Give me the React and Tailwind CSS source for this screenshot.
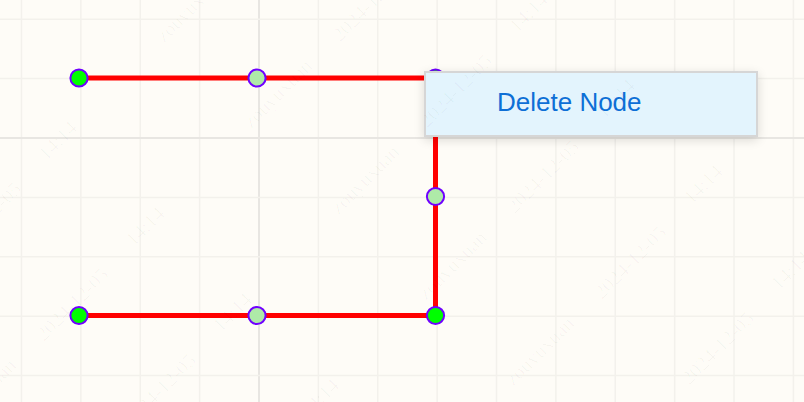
import React from "react";

// grid spacing on the canvas, axis lines at x=259 / y=138
const STEP = 59.38;
const AXIS_X = 259;
const AXIS_Y = 138;

const nodes = [
  { id: 1, x: 79, y: 78, corner: true },
  { id: 2, x: 257, y: 78, corner: false },
  { id: 3, x: 435.5, y: 78, corner: true },
  { id: 4, x: 435.5, y: 196.5, corner: false },
  { id: 5, x: 435.5, y: 315.5, corner: true },
  { id: 6, x: 257, y: 315.5, corner: false },
  { id: 7, x: 79, y: 315.5, corner: true },
];

// watermark lattice
const marks = [
  { text: "zouyuxuan", x: 452, y: 265 },
  { text: "2024-12-05", x: 630, y: 262 },
  { text: "14:14", x: 790, y: 270 },
];

const buildWatermarks = () => {
  const out = [];
  marks.forEach((m) => {
    for (let i = -8; i <= 8; i++) {
      for (let j = -3; j <= 3; j++) {
        const x = m.x + i * 87.3 + j * 558;
        const y = m.y + i * 85.8 - j * 42;
        if (x > -80 && x < 890 && y > -80 && y < 480) {
          out.push({ key: `${m.text}-${i}-${j}`, text: m.text, x, y });
        }
      }
    }
  });
  return out;
};

const gridLines = () => {
  const xs = [];
  const ys = [];
  for (let k = -5; k <= 10; k++) {
    const x = AXIS_X + k * STEP;
    if (x > 0 && x < 804) xs.push(x);
    const y = AXIS_Y + k * STEP;
    if (y > 0 && y < 402) ys.push(y);
  }
  return { xs, ys };
};

export default function App() {
  const { xs, ys } = gridLines();
  const watermarks = buildWatermarks();

  return (
    <div className="relative w-[804px] h-[402px] overflow-hidden bg-[#fefcf7]">
      {/* canvas */}
      <svg className="absolute inset-0" width="804" height="402">
        {xs.map((x) => (
          <line
            key={`x${x}`}
            x1={x}
            y1={0}
            x2={x}
            y2={402}
            stroke={Math.abs(x - AXIS_X) < 1 ? "#e8e6e2" : "#f3f1ec"}
            strokeWidth={Math.abs(x - AXIS_X) < 1 ? 2 : 1.5}
          />
        ))}
        {ys.map((y) => (
          <line
            key={`y${y}`}
            x1={0}
            y1={y}
            x2={804}
            y2={y}
            stroke={Math.abs(y - AXIS_Y) < 1 ? "#e8e6e2" : "#f3f1ec"}
            strokeWidth={Math.abs(y - AXIS_Y) < 1 ? 2 : 1.5}
          />
        ))}

        <polyline
          points="79,78 435.5,78 435.5,315.5 79,315.5"
          fill="none"
          stroke="#ff0000"
          strokeWidth="5"
        />

        {nodes.map((n) => (
          <circle
            key={n.id}
            cx={n.x}
            cy={n.y}
            r="8.6"
            fill={n.corner ? "#00ff00" : "#aeeaa8"}
            stroke="#7000ff"
            strokeWidth="2"
          />
        ))}
      </svg>

      {/* context menu */}
      <div className="absolute left-[424px] top-[71px] w-[334px] h-[66px] border-2 border-[#d6d6d6] bg-[#e3f4fd] shadow-[0_3px_10px_rgba(0,0,0,0.14)] flex items-center pl-[71px] pb-[4px]">
        <span className="font-['Liberation_Sans',Arial,sans-serif] text-[26px] leading-[30px] text-[#0d6fd6]">
          Delete Node
        </span>
      </div>

      {/* watermark on top */}
      <svg className="absolute inset-0 pointer-events-none" width="804" height="402">
        {watermarks.map((w) => (
          <text
            key={w.key}
            x={w.x}
            y={w.y}
            textAnchor="middle"
            dominantBaseline="central"
            transform={`rotate(-45 ${w.x} ${w.y})`}
            fontFamily="'Liberation Serif', serif"
            fontSize="20"
            fill="#000"
            fillOpacity="0.032"
          >
            {w.text}
          </text>
        ))}
      </svg>
    </div>
  );
}
